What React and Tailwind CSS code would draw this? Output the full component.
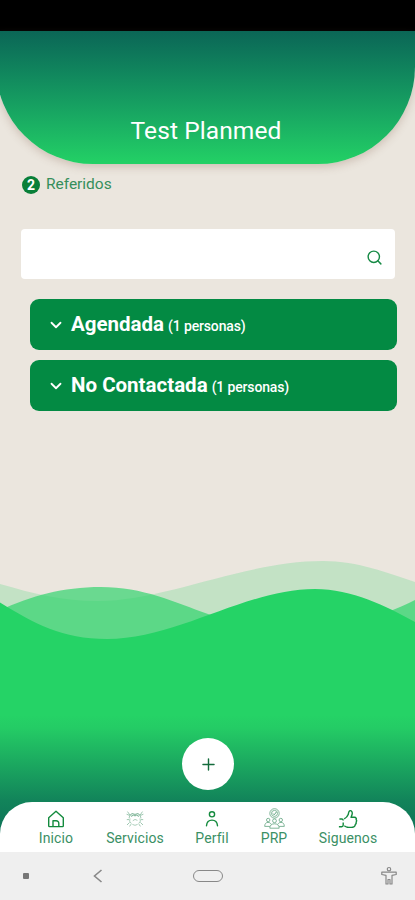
import React, { useState } from 'react';
import { ChevronDown, Search, Plus } from 'lucide-react';

const groups = [
  { id: 'agendada', title: 'Agendada', count: 1 },
  { id: 'no-contactada', title: 'No Contactada', count: 1 },
];

function HomeIcon() {
  return (
    <svg width="18" height="18" viewBox="0 0 18 18" fill="none" stroke="#138a3d" strokeWidth="1.4" strokeLinejoin="round">
      <path d="M1.700 7.800 9 1.300l7.300 6.500v8c0 .5-.3.800-.8.800h-13c-.5 0-.8-.3-.8-.8z" />
      <path d="M6 16.400v-5.600h3.200a2.600 2.600 0 0 1 2.600 2.600v3" />
    </svg>
  );
}

function ServicesIcon() {
  return (
    <svg width="18" height="18" viewBox="0 0 18 18" fill="none" stroke="#3c8f62" strokeWidth="0.7" opacity="0.7">
      <path d="M3.600 5.600 6 3.600l3 .8 3-.8 2.400 2M5 6.400l2.400-1.200 1.600.7 1.600-.7L13 6.400" strokeWidth="1" />
      <path d="M1.500 1.600 4 5.200l-1 3M16.500 1.600 14 5.200l1 3M.6 4.200l2.400 1M17.400 4.200l-2.400 1" />
      <path d="M4 8.400l-.4 2.800 1.800 2.400M14 8.400l.4 2.800-1.800 2.400M6.400 14.400 9 15.300l2.600-.9M6.800 10.800 9 9.400l2.400 1" strokeWidth="0.6" />
      <path d="M3.600 12.400 1 15M14.400 12.400 17 15M5 14.200l-1.400 2.200M13 14.200l1.400 2.200M.8 9.600H3M15 9.600h2.200" />
    </svg>
  );
}

function ProfileIcon() {
  return (
    <svg width="18" height="18" viewBox="0 0 18 18" fill="none" stroke="#138a3d" strokeWidth="1.4" strokeLinecap="round">
      <circle cx="9" cy="4.300" r="2.600" />
      <path d="M3.500 15.800c.3-3.600 2.600-5.700 5.500-5.700s5.200 2.100 5.500 5.700" />
    </svg>
  );
}

function PrpIcon() {
  return (
    <svg width="21" height="21" viewBox="0 0 21 21" fill="none" stroke="#3c8f62" strokeWidth="0.8" opacity="0.8">
      <circle cx="10.500" cy="5.400" r="4.700" />
      <circle cx="10.500" cy="5.400" r="3" />
      <path d="m8.800 5.400 1.400 1.400 2.200-2.800" strokeWidth="1" />
      <circle cx="4.200" cy="12" r="1.700" />
      <circle cx="16.800" cy="12" r="1.700" />
      <circle cx="10.500" cy="12.800" r="1.900" />
      <path d="M.7 18.400c0-2.600 1.200-4 3.300-4s2.600 1 3 1.800M20.300 18.400c0-2.600-1.200-4-3.300-4s-2.600 1-3 1.800M5.800 20.200c0-3 1.800-4.400 4.700-4.400s4.700 1.400 4.700 4.400zM.7 18.400h5.200M15.100 18.400h5.200" />
    </svg>
  );
}

function ThumbIcon() {
  return (
    <svg width="20" height="20" viewBox="0 0 20 20" fill="none" stroke="#138a3d" strokeWidth="1.4" strokeLinejoin="round">
      <path d="M6.200 9.800c2-1 3.300-2.400 4-4.300.5-1.400.2-3.500 1.700-3.800 1.800-.3 2.600 1.400 2.300 3.200-.2 1.300-.7 2.300-1.200 3.400h3.500c1.500 0 2.200 1.200 1.600 2.300.6.700.6 1.800 0 2.500.3 1-.1 1.900-.8 2.400-.1 1.600-1.100 2.500-2.600 2.700-1.500.2-4 .2-5.300 0-1.200-.2-2.100-.7-3.100-1.500" />
      <path d="M1.400 10h2.300c1 0 1.500.5 1.500 1.400" />
      <path d="M5.200 13.500v2.600c0 1-.5 1.700-1.500 1.700H.9" />
    </svg>
  );
}

const tabs = [
  { id: 'inicio', label: 'Inicio', icon: HomeIcon, box: 'ml-[35px] w-[42px]' },
  { id: 'servicios', label: 'Servicios', icon: ServicesIcon, box: 'ml-[26px] w-[64px]' },
  { id: 'perfil', label: 'Perfil', icon: ProfileIcon, box: 'ml-[24px] w-[42px]' },
  { id: 'prp', label: 'PRP', icon: PrpIcon, box: 'ml-[25px] w-[32px]' },
  { id: 'siguenos', label: 'Siguenos', icon: ThumbIcon, box: 'ml-[26px] w-[64px]' },
];

function Waves() {
  return (
    <svg className="absolute bottom-0 left-0 w-full h-[300px]" viewBox="0 552 415 300" preserveAspectRatio="none">
      <defs>
        <linearGradient id="sea" gradientUnits="userSpaceOnUse" x1="0" y1="715" x2="0" y2="852">
          <stop offset="0" stopColor="#25d366" />
          <stop offset="0.1" stopColor="#24cb65" />
          <stop offset="0.62" stopColor="#12845a" />
          <stop offset="1" stopColor="#0b6656" />
        </linearGradient>
      </defs>
      <path d="M0 584C35 594 62 601 98 601C165 601 245 561 323 561C358 561 388 573 415 582V700H0Z" fill="#25d366" fillOpacity="0.2" />
      <path d="M0 610C32 596 62 587 101 587C143 587 174 602 208 614C236 624 262 630 300 630C345 630 380 617 415 600V700H0Z" fill="#25d366" fillOpacity="0.65" />
      <path d="M0 602.500C35 624 62 639 107 639C178 639 245 589 315 589C352 589 386 606 415 622V852H0Z" fill="url(#sea)" />
    </svg>
  );
}

export default function App() {
  const [query, setQuery] = useState('');
  const [active, setActive] = useState('inicio');

  return (
    <div className="flex h-[900px] w-[415px] flex-col overflow-hidden bg-[#ebe6de] font-['Roboto',sans-serif]">
      {/* Status bar */}
      <div className="h-[31px] shrink-0 bg-black" />

      <div className="relative flex flex-1 flex-col">
        <Waves />

        <header className="relative -ml-1 flex h-[133px] shrink-0 items-end justify-center rounded-b-[97px] bg-linear-to-b from-[#0b6656] to-[#23d165] pb-[17px] shadow-[0_3px_8px_rgba(120,80,60,0.25)]">
          <h1 className="pl-px text-[24.5px] leading-8 tracking-[0.1px] text-white">Test Planmed</h1>
        </header>

        <main className="relative flex flex-1 flex-col">
          <div className="mt-3 ml-[22px] flex h-[18px] items-center">
            <span className="flex size-[18px] items-center justify-center rounded-full bg-[#087f38] text-sm leading-none font-bold text-white">2</span>
            <span className="ml-[6px] text-[15.5px] tracking-[-0.02px] text-[#358f5b]">Referidos</span>
          </div>

          <div className="mt-[35px] mr-[20px] ml-[21px] flex h-[50px] items-center rounded-[4px] bg-white pr-3">
            <input
              className="min-w-0 flex-1 bg-transparent px-3 text-base outline-none"
              value={query}
              onChange={(e) => setQuery(e.target.value)}
            />
            <Search size={17} strokeWidth={2} className="mt-[7px] text-[#168a45]" />
          </div>

          <div className="mt-5 mr-[18px] ml-[30px] flex flex-col gap-[10px]">
            {groups.map((g) => (
              <button key={g.id} type="button" className="flex h-[51px] items-center rounded-[9px] bg-[#038a43] pl-[17px] text-white">
                <ChevronDown size={18} strokeWidth={2.4} />
                <span className="-mt-px ml-[6px] text-[20.5px] leading-6 font-bold">{g.title}</span>
                <span className="mt-[3px] ml-1 text-sm font-medium tracking-[-0.15px]">({g.count} personas)</span>
              </button>
            ))}
          </div>

          <button type="button" className="mt-auto mb-3 ml-[182px] flex size-[52px] items-center justify-center rounded-full bg-white text-[#146b3c]">
            <Plus size={19} strokeWidth={1.8} />
          </button>
        </main>

        <nav className="relative flex h-[50px] shrink-0 rounded-t-[32px] bg-white">
          {tabs.map((tab) => (
            <button key={tab.id} type="button" onClick={() => setActive(tab.id)} aria-pressed={active === tab.id} className={`flex shrink-0 flex-col items-center ${tab.box}`}>
              <span className="mt-[6px] flex h-[21px] items-center justify-center"><tab.icon /></span>
              <span className="mt-px text-sm leading-4 tracking-[0.1px] whitespace-nowrap text-[#3b9065]">{tab.label}</span>
            </button>
          ))}
        </nav>
      </div>

      {/* Android navigation */}
      <div className="flex h-12 shrink-0 items-center bg-[#efefef] text-[#888]">
        <span className="ml-[23px] size-[6px] rounded-[1px] bg-[#777]" />
        <svg className="ml-[63px]" width="12" height="16" viewBox="0 0 12 16" fill="none" stroke="currentColor" strokeWidth="1.6">
          <path d="M9.500 2 2.500 8l7 6" />
        </svg>
        <span className="ml-[89px] h-3 w-[30px] rounded-full border-[1.5px] border-[#888]" />
        <svg className="ml-[157px]" width="18" height="20" viewBox="0 0 18 20" fill="none" stroke="currentColor" strokeWidth="1.2" strokeLinejoin="round">
          <circle cx="9" cy="3.200" r="1.700" />
          <path d="M1.800 6.200h14.400v2.300L12 9.300V18h-2v-4.500H8V18H6V9.300l-4.200-.8z" />
        </svg>
      </div>
    </div>
  );
}
